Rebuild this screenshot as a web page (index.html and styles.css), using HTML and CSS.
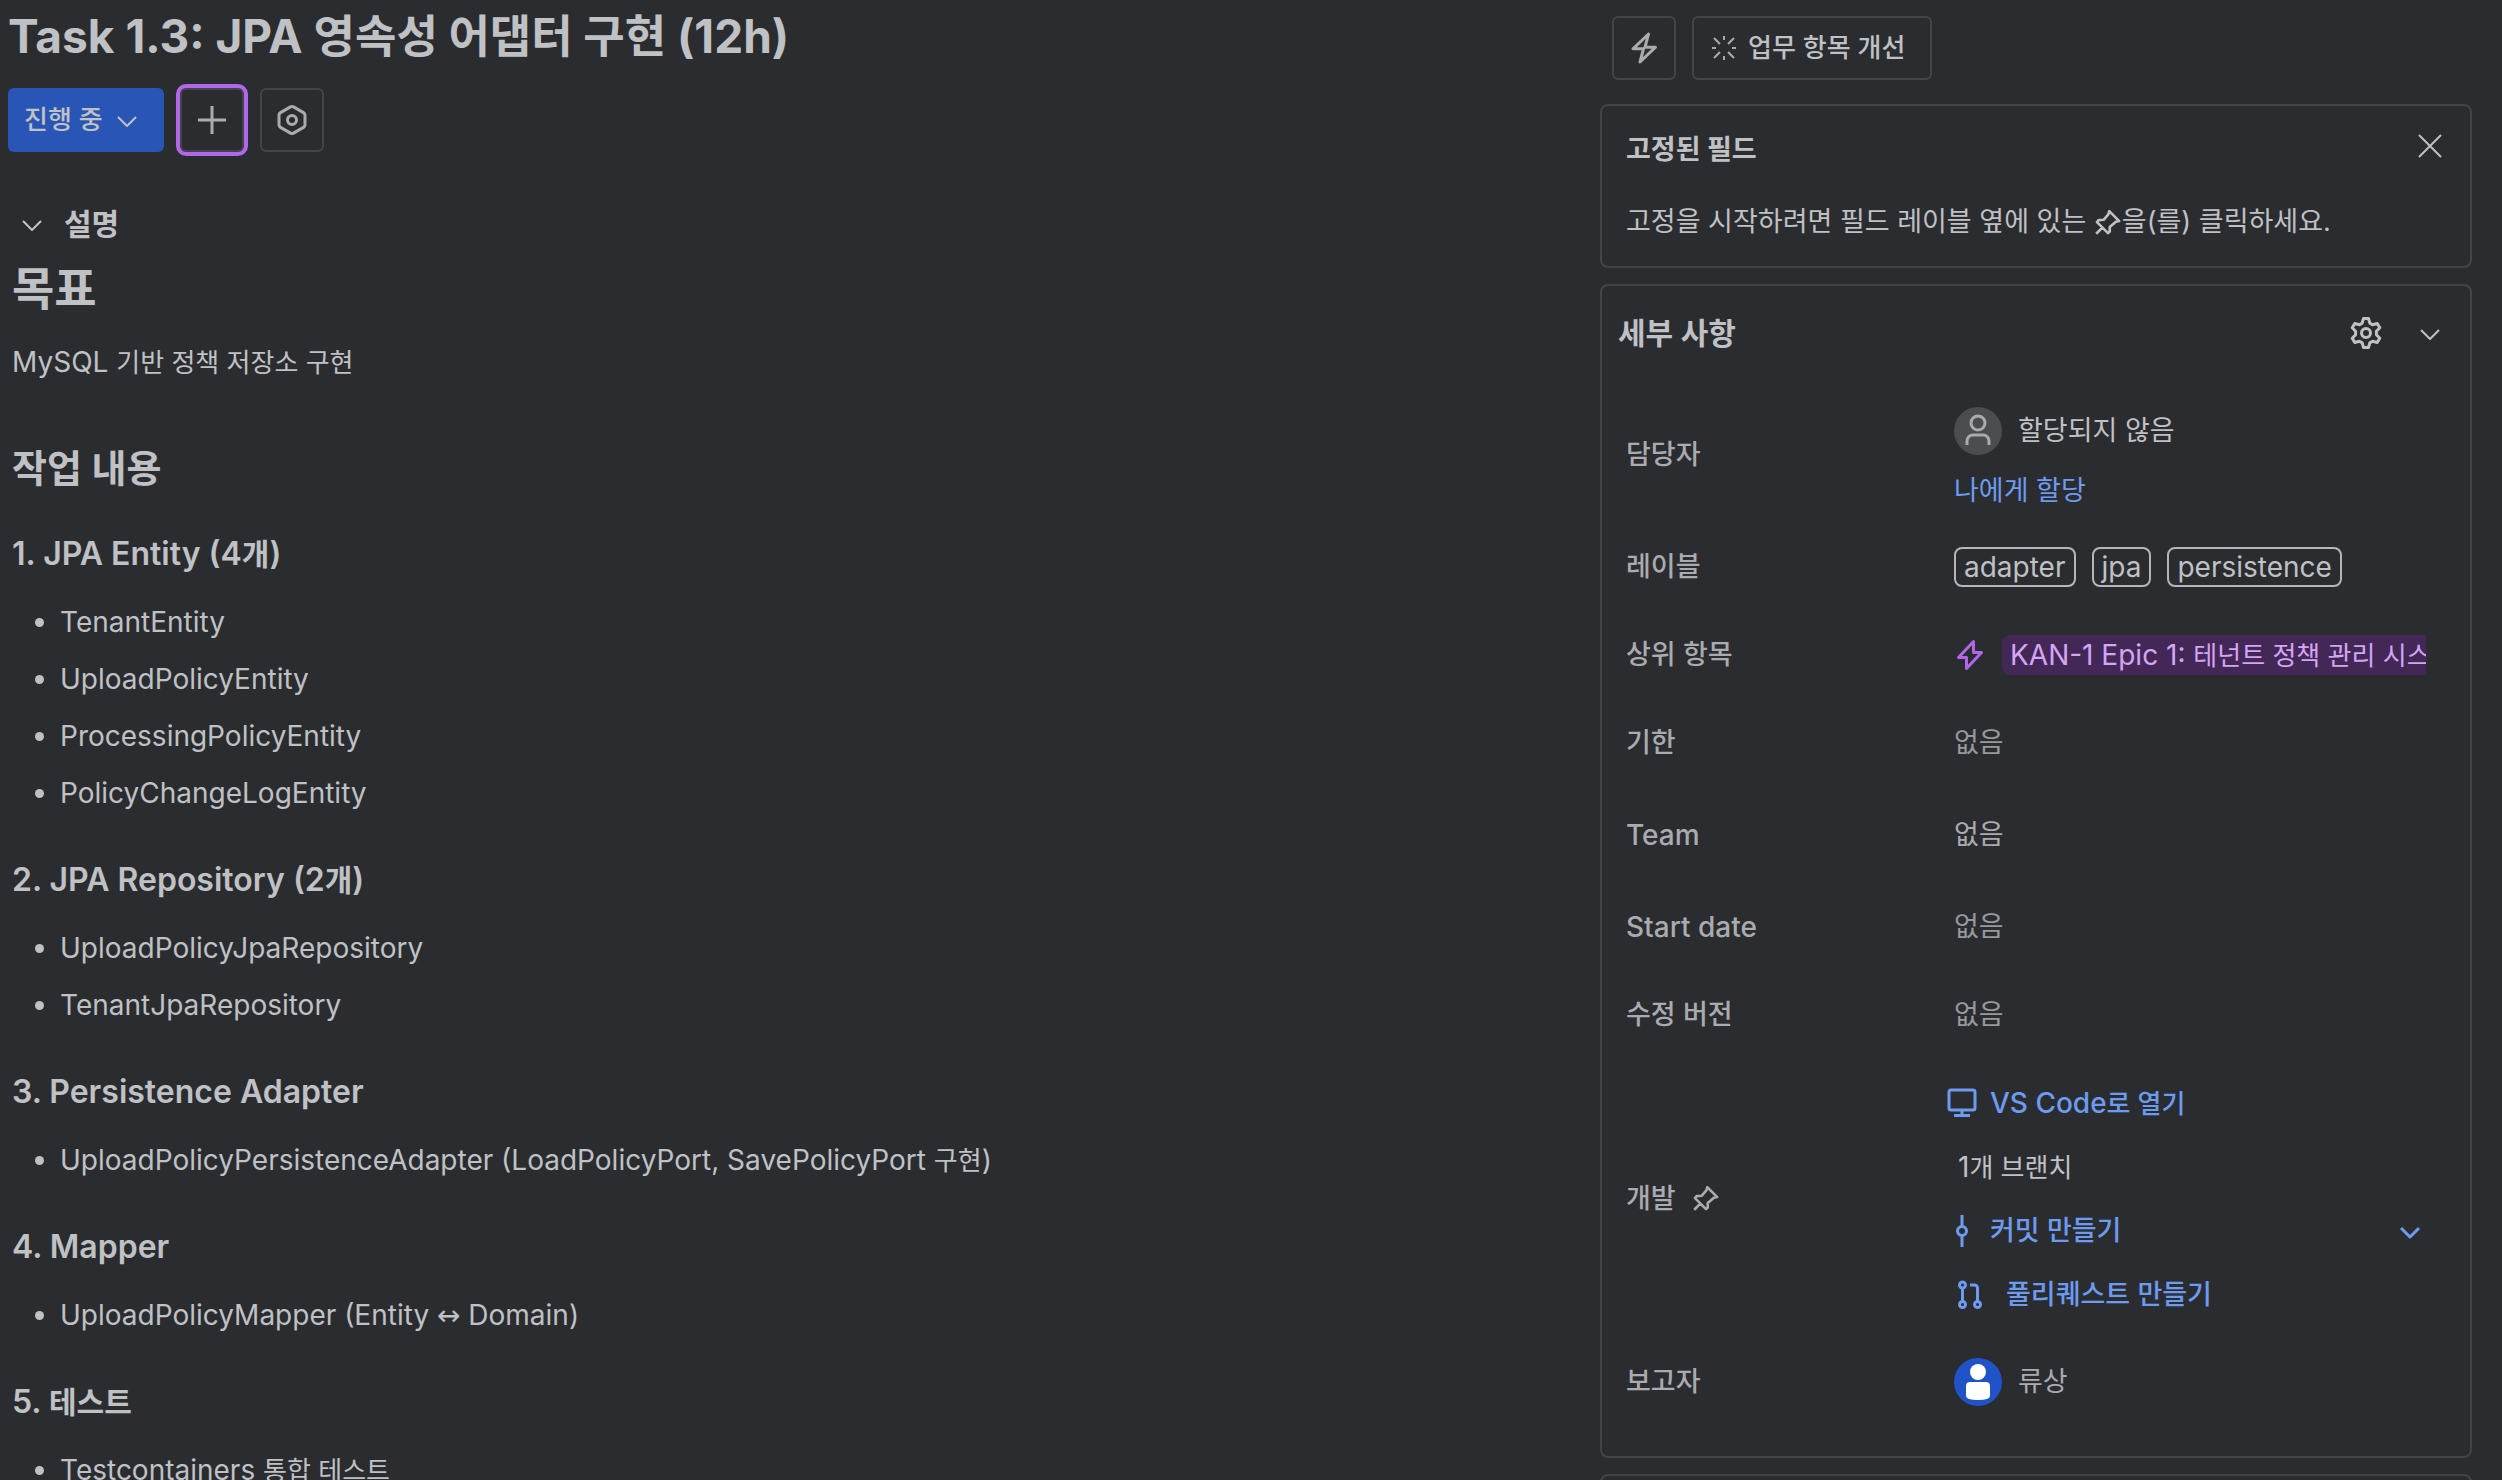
FILE: index.html
```html
<!DOCTYPE html>
<html lang="ko">
<head>
<meta charset="utf-8">
<meta name="viewport" content="width=device-width, initial-scale=1">
<title>Task 1.3: JPA 영속성 어댑터 구현 (12h)</title>
<link rel="stylesheet" href="styles.css">
</head>
<body>
<svg class="sprite" aria-hidden="true">
  <symbol id="i-chevron" viewBox="0 0 32 32"><path d="M7 13l9 9 9-9"/></symbol>
  <symbol id="i-pin" viewBox="0 0 32 32"><path d="M17.500 2.500L28.800 13.800 25 14.600 18 20.700v5L16 27.600 3.400 15l1.900-2.300 5.700-.4 5.400-6.100zM2.500 28.300l7-7"/></symbol>
</svg>
<div class="issue">
  <main class="content">
    <h1 class="title">Task 1.3: JPA <span class="ko">영속성 어댑터 구현</span> (12h)</h1>
    <div class="actions">
      <button class="btn status" type="button">진행 중 <svg class="icon"><use href="#i-chevron"/></svg></button>
      <button class="btn square focused" type="button" aria-label="추가"><svg class="icon bold" viewBox="0 0 32 32"><path d="M16 2v28M2 16h28"/></svg></button>
      <button class="btn square" type="button" aria-label="앱"><svg class="icon bold" viewBox="0 0 32 32"><path d="M14.500 2.900a3 3 0 0 1 3 0l10 5.700a3 3 0 0 1 1.500 2.600v9.600a3 3 0 0 1-1.500 2.600l-10 5.700a3 3 0 0 1-3 0l-10-5.700A3 3 0 0 1 3 20.800v-9.600a3 3 0 0 1 1.500-2.600z"/><circle cx="16" cy="16" r="4.500"/></svg></button>
    </div>
    <div class="section-head">
      <button class="toggle" type="button" aria-label="설명 접기"><svg class="icon"><use href="#i-chevron"/></svg></button>
      <h2 class="section-title">설명</h2>
    </div>
    <article class="doc">
      <h2 class="doc-h1">목표</h2>
      <p>MySQL <span class="ko">기반 정책 저장소 구현</span></p>
      <h3 class="doc-h2">작업 내용</h3>
      <h4>1. JPA Entity (4<span class="ko">개</span>)</h4>
      <ul>
        <li>TenantEntity</li>
        <li>UploadPolicyEntity</li>
        <li>ProcessingPolicyEntity</li>
        <li>PolicyChangeLogEntity</li>
      </ul>
      <h4>2. JPA Repository (2<span class="ko">개</span>)</h4>
      <ul>
        <li>UploadPolicyJpaRepository</li>
        <li>TenantJpaRepository</li>
      </ul>
      <h4>3. Persistence Adapter</h4>
      <ul>
        <li>UploadPolicyPersistenceAdapter (LoadPolicyPort, SavePolicyPort <span class="ko">구현</span>)</li>
      </ul>
      <h4>4. Mapper</h4>
      <ul>
        <li>UploadPolicyMapper (Entity <span class="arrow">↔</span> Domain)</li>
      </ul>
      <h4>5. <span class="ko">테스트</span></h4>
      <ul>
        <li>Testcontainers <span class="ko">통합 테스트</span></li>
      </ul>
    </article>
  </main>

  <aside class="side">
    <div class="toolbar">
      <button class="btn square" type="button" aria-label="자동화"><svg class="icon bold" viewBox="0 0 32 32"><path d="M20.500 2L5 16.800h10.500L12 30 27.500 15.200H17z"/></svg></button>
      <button class="btn improve" type="button"><svg class="icon small" viewBox="0 0 24 24"><path d="M12 0v4M12 20v4M0 12h4M20 12h4M2 2l6 6M22 2l-6 6M2 22l6-6M22 22l-6-6"/></svg>업무 항목 개선</button>
    </div>

    <section class="card pinned">
      <div class="pinned-head">
        <h2>고정된 필드</h2>
        <button class="toggle close" type="button" aria-label="닫기"><svg class="icon" viewBox="0 0 32 32"><path d="M5 5l22 22M27 5L5 27"/></svg></button>
      </div>
      <p>고정을 시작하려면 필드 레이블 옆에 있는 <svg class="icon pin"><use href="#i-pin"/></svg>을(를) 클릭하세요.</p>
    </section>

    <section class="card details">
      <div class="details-head">
        <h2>세부 사항</h2>
        <button class="toggle" type="button" aria-label="설정"><svg class="icon bold" viewBox="0 0 32 32"><path d="M13.500 1.500h5l1.300 4.600 2.700 1.600 4.700-1.200 2.600 4.300-3.400 3.500v3.400l3.400 3.500-2.600 4.300-4.700-1.200-2.700 1.600-1.300 4.600h-5l-1.300-4.600-2.700-1.600-4.700 1.200-2.600-4.300 3.400-3.500v-3.400L2.200 10.800l2.600-4.300 4.700 1.200 2.700-1.600z"/><circle cx="16" cy="16" r="4.500"/></svg></button>
        <button class="toggle" type="button" aria-label="접기"><svg class="icon"><use href="#i-chevron"/></svg></button>
      </div>
      <dl class="fields">
        <div class="row assignee">
          <dt>담당자</dt>
          <dd>
            <span class="person"><svg class="avatar" viewBox="0 0 48 48"><circle class="disc-gray" cx="24" cy="24" r="24"/><circle class="figure" cx="24" cy="16" r="7"/><path class="figure" d="M13 38v-4a6 6 0 0 1 6-6h10a6 6 0 0 1 6 6v4"/></svg>할당되지 않음</span>
            <a class="assign" href="#assign">나에게 할당</a>
          </dd>
        </div>
        <div class="row">
          <dt>레이블</dt>
          <dd class="tags"><a class="tag" href="#adapter">adapter</a><a class="tag" href="#jpa">jpa</a><a class="tag" href="#persistence">persistence</a></dd>
        </div>
        <div class="row">
          <dt>상위 항목</dt>
          <dd class="parent"><svg class="icon bold epic" viewBox="0 0 32 32"><path d="M19.500 2.500L4.500 18.500h8v11l15-16h-8z"/></svg><a class="epic-link" href="#KAN-1">KAN-1 Epic 1: <span class="ko">테넌트 정책 관리 시스템</span></a></dd>
        </div>
        <div class="row"><dt>기한</dt><dd class="none">없음</dd></div>
        <div class="row tall"><dt class="latin">Team</dt><dd class="none strong">없음</dd></div>
        <div class="row"><dt class="latin">Start date</dt><dd class="none">없음</dd></div>
        <div class="row"><dt>수정 버전</dt><dd class="none">없음</dd></div>
        <div class="row dev">
          <dt>개발 <svg class="icon pin"><use href="#i-pin"/></svg></dt>
          <dd>
            <a class="dev-link vscode" href="#vscode"><svg class="icon bold" viewBox="0 0 32 32"><path d="M5 3h22a2 2 0 0 1 2 2v16a2 2 0 0 1-2 2H5a2 2 0 0 1-2-2V5a2 2 0 0 1 2-2zM16 23v5M8 28.500h16"/></svg><span>VS Code<span class="ko">로 열기</span></span></a>
            <span class="branch">1<span class="ko">개 브랜치</span></span>
            <div class="commit">
              <a class="dev-link" href="#commit"><svg class="icon narrow bold" viewBox="0 0 16 32"><path d="M8 0v11M8 21v11"/><circle cx="8" cy="16" r="4.500"/></svg>커밋 만들기</a>
              <button class="toggle" type="button" aria-label="커밋 옵션"><svg class="icon bold"><use href="#i-chevron"/></svg></button>
            </div>
            <a class="dev-link pull" href="#pull"><svg class="icon bold" viewBox="0 0 32 32"><circle cx="8.500" cy="6" r="3"/><circle cx="8.500" cy="25.500" r="3"/><circle cx="23.500" cy="25.500" r="3"/><path d="M8.500 9v13.500M16 6h4.500a3 3 0 0 1 3 3v13.500"/></svg>풀리퀘스트 만들기</a>
          </dd>
        </div>
        <div class="row">
          <dt>보고자</dt>
          <dd><span class="person reporter"><svg class="avatar" viewBox="0 0 48 48"><circle class="disc-blue" cx="24" cy="24" r="24"/><circle class="solid" cx="24" cy="14" r="8"/><path class="solid" d="M16 24h16a4 4 0 0 1 4 4v10q0 4-12 4t-12-4V28a4 4 0 0 1 4-4z"/></svg>류상</span></dd>
        </div>
      </dl>
    </section>

    <section class="card more"></section>
  </aside>
</div>
</body>
</html>
```
FILE: styles.css
```css
:root {
  --bg: #2b2c30;
  --text: #bfc1c4;
  --subtle: #a9abaf;
  --faint: #96999e;
  --line: #434448;
  --link: #6c9bef;
}

* { box-sizing: border-box; }

html, body { height: 100%; }

body {
  margin: 0;
  overflow: hidden;
  background: var(--bg);
  color: var(--text);
  font: 400 28px/48px Inter, "Noto Sans CJK KR", sans-serif;
}

h1, h2, h3, h4, p, ul, dl, dd { margin: 0; padding: 0; }

a { color: var(--link); text-decoration: none; }

button {
  margin: 0;
  padding: 0;
  border: 0;
  background: none;
  color: inherit;
  font: inherit;
}

.sprite { position: absolute; width: 0; height: 0; }

/* Hangul is drawn slightly smaller than the Latin text beside it */
.ko { font-size: 26px; line-height: 1; }
.arrow { font-family: "DejaVu Sans", sans-serif; line-height: 1; }

.icon {
  width: 32px;
  height: 32px;
  flex: none;
  fill: none;
  stroke: currentColor;
  stroke-width: 2;
  stroke-linejoin: round;
}
.icon.bold { stroke-width: 3; }
.icon.small { width: 24px; height: 24px; color: var(--subtle); }
.icon.narrow { width: 16px; }
.icon.pin { width: 28px; height: 28px; stroke-width: 3; }

.issue {
  display: grid;
  grid-template-columns: minmax(0, 1fr) 872px;
  gap: 40px;
  height: 100%;
  padding: 0 30px 0 8px;
  overflow: hidden;
}

/* Main column */
.title {
  font-size: 46px;
  font-weight: 700;
  line-height: 72px;
}
.title .ko { font-size: 45px; }

.actions {
  display: flex;
  gap: 16px;
  margin-top: 16px;
}

.btn {
  display: flex;
  align-items: center;
  justify-content: center;
  height: 64px;
  border: 2px solid var(--line);
  border-radius: 6px;
  font-size: 26px;
  font-weight: 500;
  white-space: nowrap;
}
.btn.square { width: 64px; color: var(--subtle); }
.btn.status {
  justify-content: flex-start;
  gap: 8px;
  width: 156px;
  padding: 0 16px;
  border: 0;
  background: #2956b6;
}
.btn.focused { outline: 4px solid #b266ea; }

.section-head {
  display: flex;
  align-items: center;
  gap: 16px;
  height: 48px;
  margin-top: 48px;
  padding-left: 8px;
}
.section-title { font-size: 30px; font-weight: 600; }

.toggle { display: flex; }

.doc { padding: 8px 4px 0; }
.doc-h1 { font-size: 46px; font-weight: 600; line-height: 64px; }
.doc p { margin-top: 18px; }
.doc-h2 { margin-top: 50px; font-size: 38px; font-weight: 600; line-height: 64px; }
.doc h4 { margin-top: 38px; font-size: 32px; font-weight: 600; line-height: 48px; }
.doc .doc-h2 + h4 { margin-top: 30px; }
.doc h4 .ko { font-size: 30px; }
.doc ul { margin-top: 20px; padding-left: 48px; }
.doc li { line-height: 49px; }
.doc li + li { margin-top: 8px; }

/* Side column */
.toolbar {
  display: flex;
  gap: 16px;
  padding: 16px 12px 24px;
}
.improve { justify-content: flex-start; gap: 12px; width: 240px; padding: 0 18px; }

.card {
  border: 2px solid var(--line);
  border-radius: 8px;
}

.pinned { padding: 20px 24px; font-size: 27px; }
.pinned-head {
  display: flex;
  align-items: flex-start;
  justify-content: space-between;
}
.pinned-head h2 { font-size: 27px; font-weight: 700; }
.close { align-items: center; height: 40px; }
.pinned p { margin-top: 24px; }
.pinned .pin { vertical-align: -6px; }

.details { margin-top: 16px; padding-bottom: 30px; }
.details-head {
  display: flex;
  align-items: center;
  gap: 32px;
  height: 93px;
  margin-bottom: 8px;
  padding: 0 24px 0 16px;
}
.details-head h2 { flex: 1; font-size: 30px; font-weight: 600; }

.row {
  display: grid;
  grid-template-columns: 328px minmax(0, 1fr);
  align-items: center;
  height: 88px;
  padding: 0 44px 0 24px;
  font-size: 27px;
}
.row.tall { height: 96px; }
.row.assignee { height: 136px; }
.row.assignee dd { padding-top: 12px; }
.row.dev { height: 279px; }

dt {
  display: flex;
  align-items: center;
  gap: 16px;
  color: var(--subtle);
  font-weight: 500;
}
dt.latin { font-size: 28px; }

.person { display: flex; align-items: center; gap: 16px; }
.person.reporter { color: var(--subtle); }
.avatar { width: 48px; height: 48px; }
.disc-gray { fill: #4b4d51; }
.disc-blue { fill: #2153c8; }
.solid { fill: #fff; }
.figure { fill: none; stroke: #a9abaf; stroke-width: 3; }
.assign { display: block; margin-top: 12px; }

.tags { display: flex; gap: 16px; }
.tag {
  height: 40px;
  padding: 0 8px;
  border: 2px solid #b4b6ba;
  border-radius: 8px;
  color: var(--text);
  font-size: 28px;
  line-height: 36px;
}

.parent { display: flex; align-items: center; gap: 16px; overflow: hidden; }
.epic { color: #b266ea; }
.epic-link {
  flex: none;
  height: 40px;
  padding: 0 8px;
  border-radius: 8px;
  background: #432757;
  color: #d3a5f3;
  font-size: 28px;
  line-height: 40px;
}

.none { color: var(--faint); }
.none.strong { color: var(--subtle); }

.row.dev dd { display: grid; gap: 16px; }
.dev-link {
  display: flex;
  align-items: center;
  gap: 12px;
  font-weight: 500;
}
.vscode { margin-left: -8px; font-size: 28px; }
.branch { padding-left: 4px; font-size: 28px; }
.commit {
  display: flex;
  align-items: center;
  justify-content: space-between;
  color: var(--link);
}
.commit .dev-link { gap: 20px; }
.pull { gap: 20px; }

.more { height: 120px; margin-top: 16px; }
```
